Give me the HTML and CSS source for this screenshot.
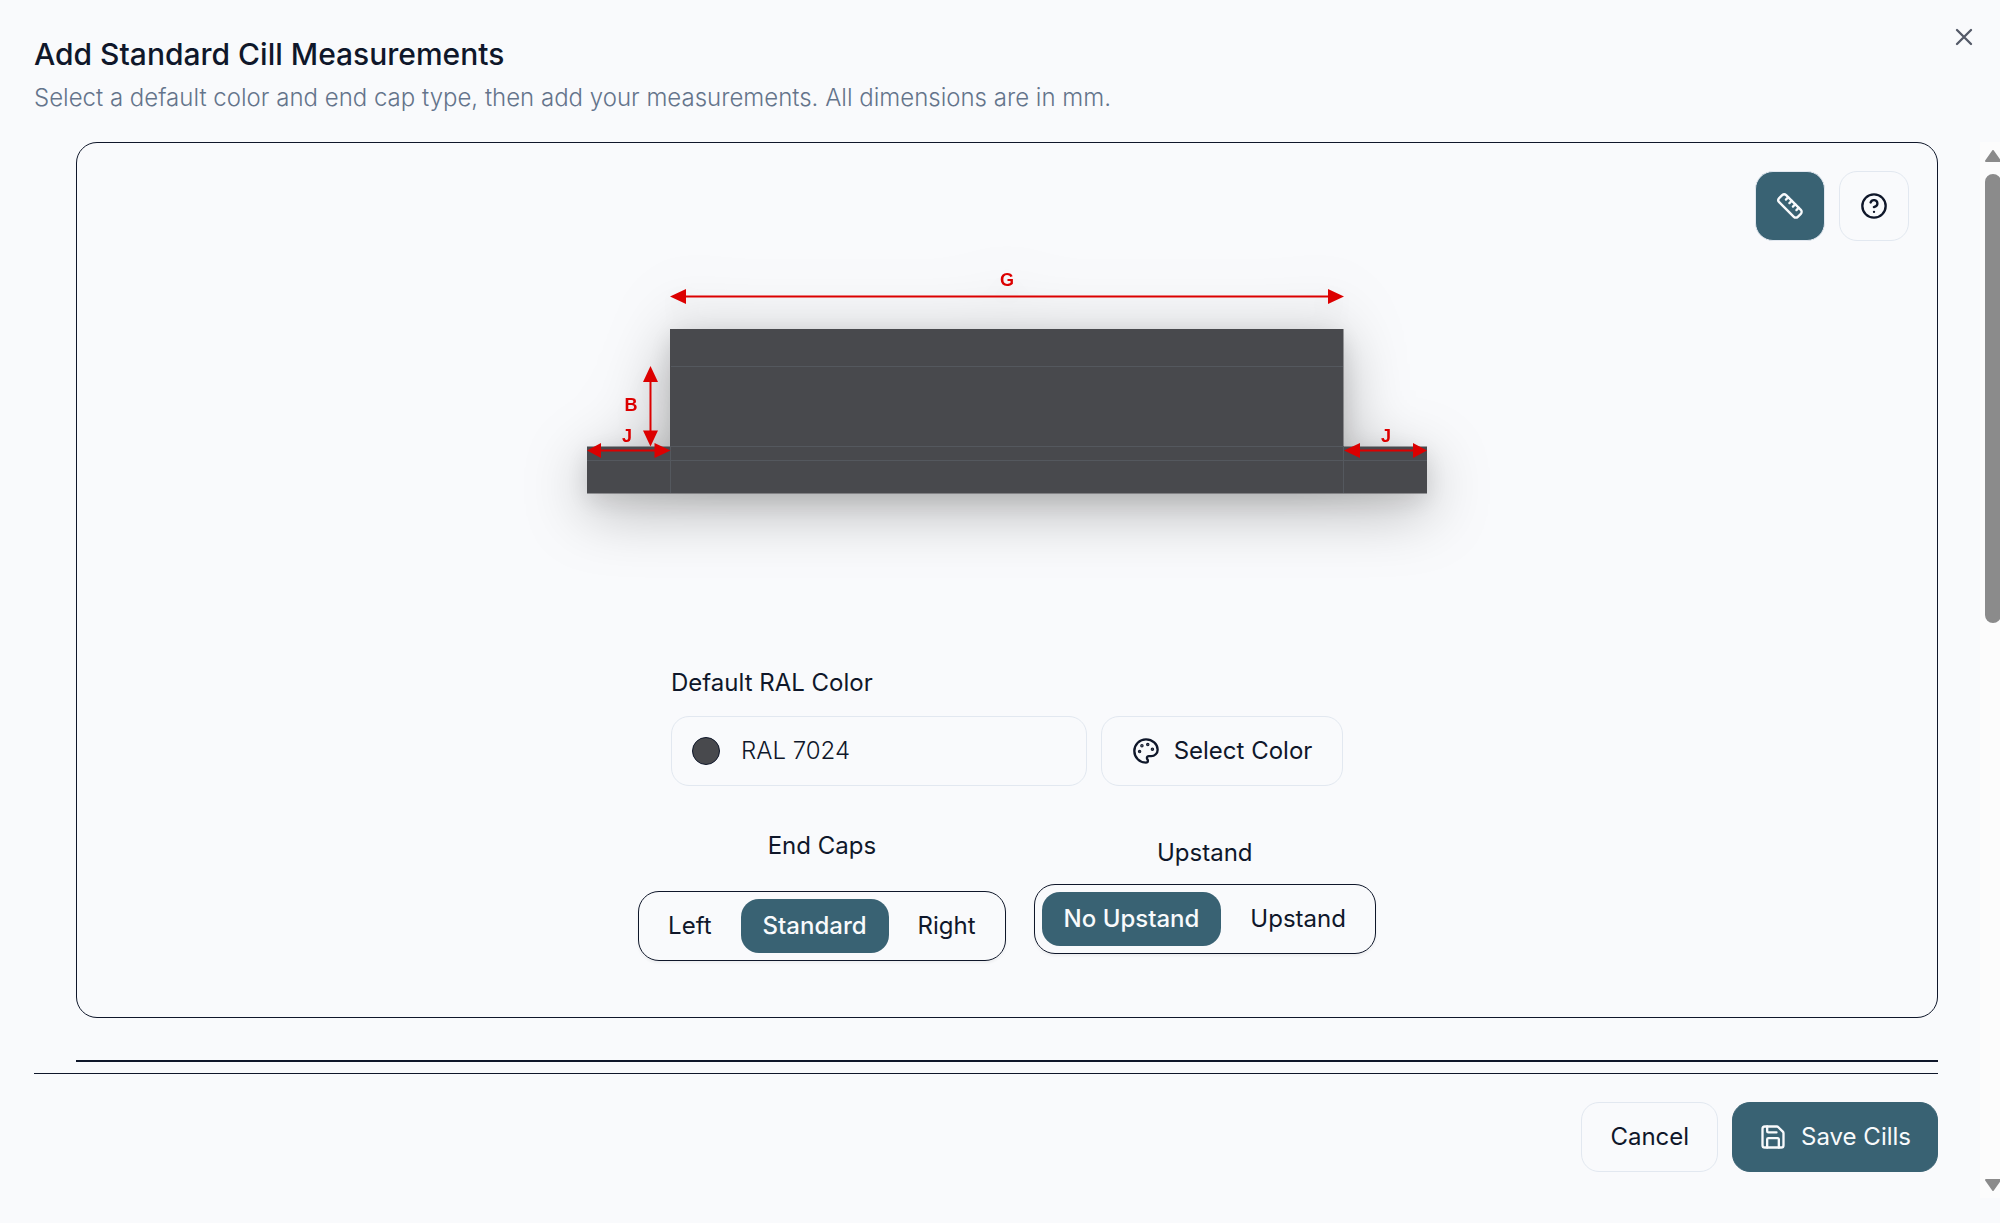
FILE: index.html
```html
<!DOCTYPE html>
<html lang="en">
<head>
<meta charset="utf-8">
<title>Add Standard Cill Measurements</title>
<link rel="stylesheet" href="styles.css">
</head>
<body>
<main class="dialog" role="dialog" aria-labelledby="dialog-title">
  <header class="dialog-header">
    <h1 class="title" id="dialog-title">Add Standard Cill Measurements</h1>
    <p class="subtitle">Select a default color and end cap type, then add your measurements. All dimensions are in mm.</p>
    <button class="close" type="button" aria-label="Close">
      <svg class="icon" viewBox="0 0 24 24"><path d="M18 6 6 18M6 6l12 12"/></svg>
    </button>
  </header>

  <div class="dialog-body">
    <div class="content">
      <section class="card">
        <div class="toolbar">
          <button class="btn btn-icon btn-primary" type="button" aria-label="Toggle measurements">
            <svg class="icon" viewBox="0 0 24 24"><path d="M21.3 15.3a2.4 2.4 0 0 1 0 3.4l-2.6 2.6a2.4 2.4 0 0 1-3.4 0L2.7 8.7a2.41 2.41 0 0 1 0-3.4l2.6-2.6a2.41 2.41 0 0 1 3.4 0Z"/><path d="m14.5 12.5 2-2M11.5 9.5l2-2M8.5 6.5l2-2M17.5 15.5l2-2"/></svg>
          </button>
          <button class="btn btn-icon" type="button" aria-label="Help">
            <svg class="icon" viewBox="0 0 24 24"><circle cx="12" cy="12" r="10"/><path d="M9.09 9a3 3 0 0 1 5.83 1c0 2-3 3-3 3M12 17h.01"/></svg>
          </button>
        </div>

        <svg class="diagram" viewBox="0 0 840 252" role="img" aria-label="Cill with dimensions G, B and J">
          <path class="cill" d="M83 88H756.500V205.500H840V252.500H0V205.500H83Z"/>
          <path class="fold" d="M84 125.500H756M84 205.500H756M0 219.500H840M83.500 205V252M756.500 205V252"/>
          <g class="dimension">
            <path d="M90 55.500H750M63.500 135V195M10 209.500H74M766 209.500H830"/>
            <path class="arrow" d="M83 55.500l16-7.500v15zM757 55.500l-16-7.500v15zM63.500 125l-7.500 16h15zM63.500 205.500l-7.500-16h15zM0 209.500l14-7.500v15zM83.500 209.500l-16-7.500v15zM757 209.500l16-7.500v15zM840 209.500l-14-7.500v15z"/>
            <text x="420" y="45">G</text>
            <text x="44" y="170">B</text>
            <text x="40" y="201">J</text>
            <text x="799" y="201">J</text>
          </g>
        </svg>

        <div class="color-field">
          <label class="label" for="ral">Default RAL Color</label>
          <div class="color-row">
            <div class="color-value">
              <span class="swatch"></span>
              <input class="color-input" id="ral" type="text" value="RAL 7024" readonly>
            </div>
            <button class="btn btn-select" type="button">
              <svg class="icon" viewBox="0 0 24 24"><g class="dot"><circle cx="13.500" cy="6.500" r=".5"/><circle cx="17.500" cy="10.500" r=".5"/><circle cx="8.500" cy="7.500" r=".5"/><circle cx="6.500" cy="12.500" r=".5"/></g><path d="M12 2C6.500 2 2 6.500 2 12s4.500 10 10 10c.926 0 1.648-.746 1.648-1.688 0-.437-.18-.835-.437-1.125-.29-.289-.438-.652-.438-1.125a1.640 1.640 0 0 1 1.668-1.668h1.996c3.051 0 5.555-2.503 5.555-5.554C21.965 6.012 17.461 2 12 2z"/></svg>
              Select Color
            </button>
          </div>
        </div>

        <div class="options">
          <div class="option option-caps">
            <span class="label" id="caps">End Caps</span>
            <div class="segments" role="group" aria-labelledby="caps">
              <button class="segment" type="button" aria-pressed="false">Left</button>
              <button class="segment active" type="button" aria-pressed="true">Standard</button>
              <button class="segment" type="button" aria-pressed="false">Right</button>
            </div>
          </div>
          <div class="option">
            <span class="label" id="upstand">Upstand</span>
            <div class="segments" role="group" aria-labelledby="upstand">
              <button class="segment active" type="button" aria-pressed="true">No Upstand</button>
              <button class="segment" type="button" aria-pressed="false">Upstand</button>
            </div>
          </div>
        </div>
      </section>

      <hr class="list-rule">

      <footer class="actions">
        <button class="btn" type="button">Cancel</button>
        <button class="btn btn-primary btn-save" type="button">
          <svg class="icon" viewBox="0 0 24 24"><path d="M15.200 3a2 2 0 0 1 1.400.6l3.800 3.800a2 2 0 0 1 .6 1.400V19a2 2 0 0 1-2 2H5a2 2 0 0 1-2-2V5a2 2 0 0 1 2-2z"/><path d="M17 21v-7a1 1 0 0 0-1-1H8a1 1 0 0 0-1 1v7M7 3v4a1 1 0 0 0 1 1h7"/></svg>
          Save Cills
        </button>
      </footer>
    </div>

    <div class="scrollbar" aria-hidden="true">
      <svg class="scroll-arrow" viewBox="0 0 16 12"><path d="M8 1 15 11H1z"/></svg>
      <div class="thumb"></div>
      <svg class="scroll-arrow scroll-down" viewBox="0 0 16 12"><path d="M8 11 15 1H1z"/></svg>
    </div>
  </div>
</main>
</body>
</html>
```
FILE: styles.css
```css
* { box-sizing: border-box; }

body {
  margin: 0;
  background: #f9fafc;
  color: #0f172a;
  font-family: Inter, "Open Sans", sans-serif;
  font-size: 24px;
  line-height: 28px;
}

button, input { font: inherit; color: inherit; }

button {
  background: none;
  border: 0;
  padding: 0;
  cursor: pointer;
}

.dialog {
  display: flex;
  flex-direction: column;
  min-height: 100vh;
  padding-bottom: 25px;
}

/* Header */
.dialog-header {
  position: relative;
  padding: 36px 34px 30px;
}

.title {
  margin: 0 0 12px;
  font-size: 30px;
  line-height: 36px;
  font-weight: 500;
}

.subtitle {
  margin: 0;
  color: #64748b;
  font-weight: 300;
}

.close {
  position: absolute;
  top: 23px;
  right: 22px;
  opacity: .7;
}

.icon {
  display: block;
  flex: none;
  width: 28px;
  height: 28px;
  fill: none;
  stroke: currentColor;
  stroke-width: 2;
  stroke-linecap: round;
  stroke-linejoin: round;
}

.dot { fill: currentColor; }

/* Body */
.dialog-body {
  display: flex;
  flex: 1;
}

.content {
  flex: 1;
  padding: 0 42px 0 34px;
}

.card {
  display: flex;
  flex-direction: column;
  align-items: center;
  margin-left: 42px;
  padding: 28px 28px 56px;
  border: 1px solid #0f172a;
  border-radius: 21px;
}

.toolbar {
  display: flex;
  gap: 14px;
  align-self: flex-end;
}

.btn {
  display: inline-flex;
  align-items: center;
  justify-content: center;
  gap: 14px;
  height: 70px;
  padding: 0 28px;
  border: 1px solid #e2e8f0;
  border-radius: 18px;
}

.btn-icon {
  width: 70px;
  padding: 0;
}

.btn-primary {
  background: #396273;
  color: #f8fafc;
}

/* Diagram */
.diagram {
  width: 100%;
  max-width: 840px;
  overflow: visible;
  filter: drop-shadow(0 7px 12px rgba(0, 0, 0, .1)) drop-shadow(0 16px 30px rgba(0, 0, 0, .28));
}

.cill { fill: #48494d; }

.fold {
  fill: none;
  stroke: #54585e;
}

.dimension {
  fill: none;
  stroke: #dc0000;
  stroke-width: 2;
}

.arrow {
  fill: #dc0000;
  stroke: none;
}

.dimension text {
  fill: #dc0000;
  stroke: none;
  font: bold 18px "Liberation Sans", sans-serif;
  text-anchor: middle;
}

/* Color picker */
.color-field {
  width: 100%;
  max-width: 672px;
  margin-top: 176px;
}

.label { display: block; }

.color-row {
  display: flex;
  gap: 14px;
  margin-top: 19px;
}

.color-value {
  display: flex;
  flex: 1;
  align-items: center;
  gap: 21px;
  min-width: 0;
  height: 70px;
  padding: 0 20px;
  border: 1px solid #e2e8f0;
  border-radius: 18px;
}

.swatch {
  flex: none;
  width: 28px;
  height: 28px;
  border: 1px solid #0f172a;
  border-radius: 50%;
  background: #48494d;
}

.color-input {
  flex: 1;
  min-width: 0;
  padding: 0;
  border: 0;
  outline: 0;
  background: none;
  font-weight: 300;
}

.btn-select {
  width: 242px;
  padding: 0;
}

/* Segmented options */
.options {
  display: flex;
  align-items: center;
  gap: 28px;
  margin-top: 46px;
}

.option {
  display: flex;
  flex-direction: column;
  align-items: center;
  gap: 17px;
}

.option-caps { gap: 31px; }

.segments {
  display: flex;
  gap: 7px;
  height: 70px;
  padding: 7px;
  border: 1px solid #0f172a;
  border-radius: 21px;
  box-shadow: 0 2px 3px rgba(0, 0, 0, .05);
}

.segment {
  padding: 0 22px;
  border-radius: 18px;
}

.active {
  background: #396273;
  color: #f8fafc;
  font-weight: 500;
}

/* Footer */
.list-rule {
  height: 2px;
  margin: 42px 0 11px 42px;
  border: 0;
  background: #0f172a;
}

.actions {
  display: flex;
  justify-content: flex-end;
  gap: 14px;
  padding-top: 28px;
  border-top: 1px solid #0f172a;
}

.btn-save {
  padding: 0 26px;
  border-color: #396273;
}

/* Scrollbar */
.scrollbar {
  display: flex;
  flex-direction: column;
  width: 20px;
  padding: 8px 0 7px 5px;
  overflow: hidden;
  background: #fcfcfc;
}

.scroll-arrow {
  flex: none;
  width: 16px;
  height: 12px;
  fill: #8b8b8b;
  stroke: #8b8b8b;
  stroke-width: 2;
  stroke-linejoin: round;
}

.thumb {
  width: 16px;
  height: 449px;
  margin-top: 12px;
  border-radius: 8px;
  background: #8b8b8b;
}

.scroll-down { margin-top: auto; }
```
